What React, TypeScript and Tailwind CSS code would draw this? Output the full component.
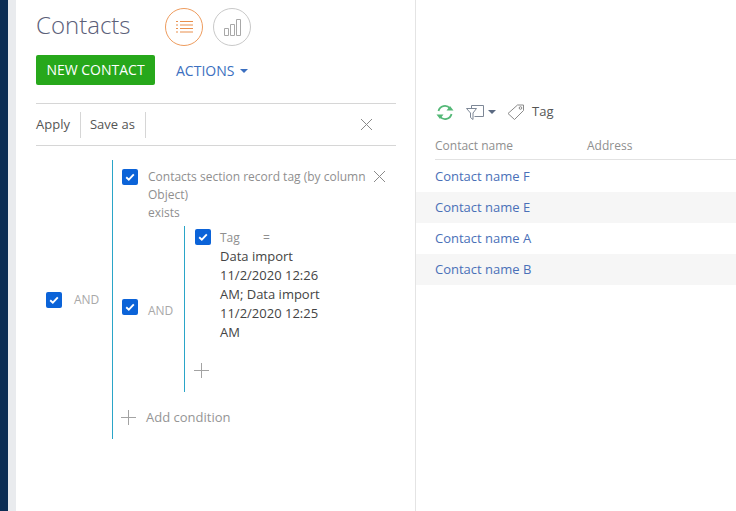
import React from 'react';

const Check = () => (
  <span className="flex h-4 w-4 shrink-0 items-center justify-center rounded-[2px] bg-[#0b63d8]">
    <svg width="10" height="8" viewBox="0 0 10 8" fill="none">
      <path d="M1.2 4.2 L3.8 6.6 L8.8 1.4" stroke="#fff" strokeWidth="1.9" />
    </svg>
  </span>
);

const Cross = () => (
  <svg width="13" height="13" viewBox="0 0 13 13" fill="none" className="shrink-0">
    <path d="M1 1 L12 12 M12 1 L1 12" stroke="#8a8a8a" strokeWidth="1" />
  </svg>
);

const Plus = () => (
  <svg width="15" height="15" viewBox="0 0 15 15" fill="none" className="shrink-0">
    <path d="M7.5 0 V15 M0 7.5 H15" stroke="#a3a3a3" strokeWidth="1" />
  </svg>
);

const rows = [
  { name: 'Contact name F', alt: false },
  { name: 'Contact name E', alt: true },
  { name: 'Contact name A', alt: false },
  { name: 'Contact name B', alt: true },
];

export default function App() {
  return (
    <div className="flex h-[511px] w-[736px] overflow-hidden bg-white font-['Open_Sans',sans-serif] text-[13px] text-[#444]">
      <div className="w-2 shrink-0 bg-[#0c2d54]" />
      <div className="w-2 shrink-0 bg-[#e9ebee]" />

      {/* filter panel */}
      <div className="flex w-[400px] shrink-0 flex-col border-r border-[#e4e4e4] pl-5 pr-[19px]">
        <div className="flex h-[55px] shrink-0 items-start pt-2">
          <h1 className="w-[129px] text-2xl font-light leading-[34px] text-[#5b6079]">Contacts</h1>
          <div className="flex gap-2.5">
            <span className="flex h-[38px] w-[38px] items-center justify-center rounded-full border border-[#ee9c5e]">
              <svg width="17" height="14" viewBox="0 0 17 14" fill="none" stroke="#e98f4c" strokeWidth="1">
                <path d="M0 1.5 H2 M4 1.5 H17 M0 5 H2 M4 5 H17 M0 8.5 H2 M4 8.5 H17 M0 12 H2 M4 12 H17" />
              </svg>
            </span>
            <span className="flex h-[38px] w-[38px] items-center justify-center rounded-full border border-[#c9c9c9]">
              <svg width="18" height="18" viewBox="0 0 18 18" fill="none" stroke="#a8a8a8" strokeWidth="1">
                <path d="M1.5 10.5 H5.5 V17.5 H1.5 Z M7.5 6.5 H11.5 V17.5 H7.5 Z M13.5 1.5 H17.5 V17.5 H13.5 Z" />
              </svg>
            </span>
          </div>
        </div>

        <div className="flex h-[48px] shrink-0 items-start">
          <button className="flex h-[30px] w-[119px] items-center justify-center rounded-[2px] bg-[#27a81b] text-sm text-white">
            NEW CONTACT
          </button>
          <button className="ml-[21px] flex h-[32px] items-center gap-1.5 text-sm text-[#3b6fc0]">
            ACTIONS
            <span className="h-0 w-0 border-x-4 border-t-4 border-x-transparent border-t-[#3b6fc0]" />
          </button>
        </div>

        <div className="flex h-[43px] shrink-0 items-center border-y border-[#d6d6d6] text-[#555]">
          <span>Apply</span>
          <span className="ml-[10px] h-[26px] w-px bg-[#d6d6d6]" />
          <span className="ml-[9px]">Save as</span>
          <span className="ml-[10px] h-[26px] w-px bg-[#d6d6d6]" />
          <span className="ml-auto mr-[23px] flex"><Cross /></span>
        </div>

        {/* condition tree */}
        <div className="mt-[14px] flex items-center pl-2.5">
          <Check />
          <span className="ml-3 w-[38px] text-xs text-[#a8a8a8]">AND</span>
          <div className="flex h-[279px] w-[284px] flex-col border-l border-l-[#2aa5c8] pl-[9px] pt-[9px]">
            <div className="flex items-start">
              <Check />
              <div className="ml-2.5 -mt-[1px] w-[225px] text-xs leading-[18px] text-[#8f8f8f]">
                Contacts section record tag (by column Object)
                <br />
                exists
              </div>
              <span className="mt-[1px] flex"><Cross /></span>
            </div>

            <div className="mt-1 flex items-center">
              <span className="mb-1 flex"><Check /></span>
              <span className="ml-2.5 mt-[3px] w-[36px] text-xs text-[#a8a8a8]">AND</span>
              <div className="flex h-[166px] flex-col border-l border-l-[#2aa5c8] pl-2.5 pt-[3px]">
                <div className="flex items-start">
                  <Check />
                  <div className="ml-[9px] w-[112px]">
                    <div className="mt-px flex h-4 items-center text-xs text-[#8f8f8f]">
                      <span className="w-[43px]">Tag</span>
                      <span>=</span>
                    </div>
                    <div className="mt-[1px] leading-[19px] text-[#444]">
                      Data import 11/2/2020 12:26 AM; Data import 11/2/2020 12:25 AM
                    </div>
                  </div>
                </div>
                <span className="-ml-px mt-[21px] flex"><Plus /></span>
              </div>
            </div>

            <div className="mt-[16px] flex items-center">
              <span className="-ml-px flex"><Plus /></span>
              <span className="ml-[10px] text-[#959595]">Add condition</span>
            </div>
          </div>
        </div>
      </div>

      {/* results */}
      <div className="min-w-0 flex-1">
        <div className="mt-[102px] flex h-[20px] items-center pl-5">
          <svg width="18" height="17" viewBox="0 0 18 17" fill="none" stroke="#54b877" strokeWidth="1.8">
            <path d="M2.5 7 A6.5 6.5 0 0 1 14 4.5 M15.5 10 A6.5 6.5 0 0 1 4 12.5" />
            <path d="M10.5 6.5 H17.5 L14 2 Z M7.5 10.5 H0.5 L4 15 Z" fill="#54b877" stroke="none" />
          </svg>
          <svg className="ml-[12px]" width="18" height="17" viewBox="0 0 18 17" fill="none" stroke="#7d8796" strokeWidth="1">
            <path d="M5.5 4.5 V1.5 H17.5 V12.5 H8.5 M0.5 4.5 H10.5 L7 9 V15.5 L4.5 13.5 V9 Z" />
          </svg>
          <span className="ml-1 h-0 w-0 border-x-4 border-t-4 border-x-transparent border-t-[#5b6a82]" />
          <svg className="ml-[11px]" width="18" height="18" viewBox="0 0 18 18" fill="none" stroke="#8a8a8a" strokeWidth="1">
            <path d="M1 10.5 L10.5 2 H16.5 V7.5 L7.5 16.5 Z" />
            <circle cx="13.5" cy="5" r="1.3" />
          </svg>
          <span className="ml-[7px] text-[#555]">Tag</span>
        </div>

        <div className="ml-[19px] mt-[13px] flex h-[25px] items-center border-b border-[#e2e2e2] pb-[3px] text-xs text-[#8f8f8f]">
          <span className="w-[152px]">Contact name</span>
          <span>Address</span>
        </div>

        <div className="mt-px">
          {rows.map((row) => (
            <div
              key={row.name}
              className={`flex h-[31px] items-center pl-[19px] text-[#4a70b8] ${row.alt ? 'bg-[#f6f6f6]' : ''}`}
            >
              {row.name}
            </div>
          ))}
        </div>
      </div>
    </div>
  );
}
